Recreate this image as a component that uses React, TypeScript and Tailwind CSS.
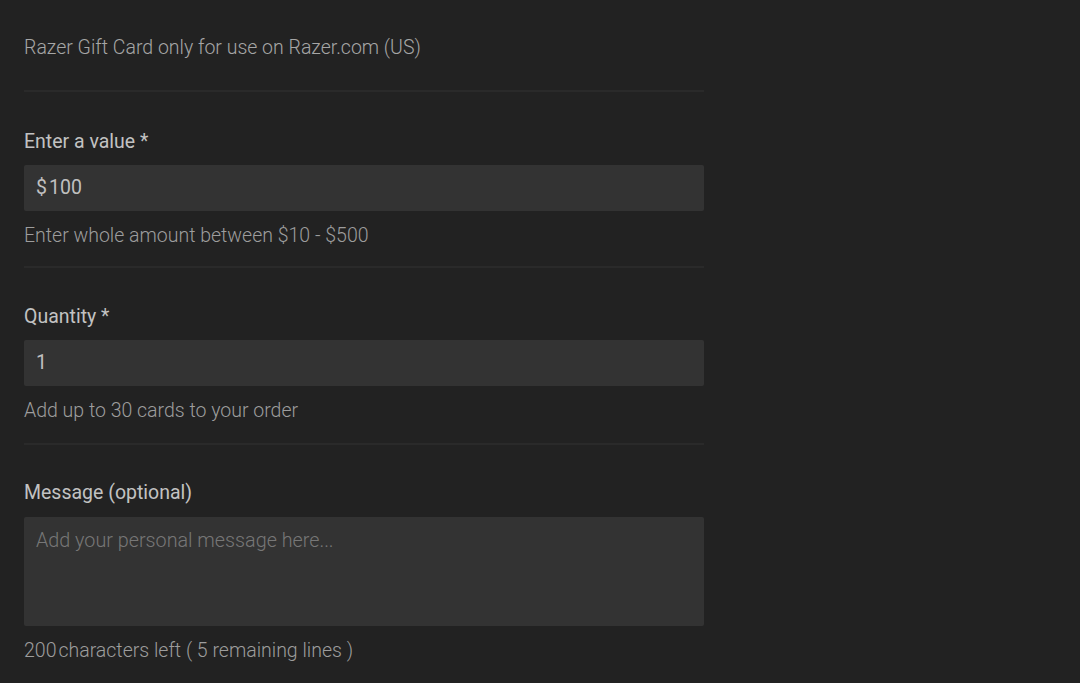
import React from "react";

function Divider() {
  return <div className="h-[2px] bg-[#2a2a2a]" />;
}

export default function App() {
  return (
    <div className="min-h-[683px] w-full bg-[#222222] font-['Roboto',sans-serif] font-light text-[19.5px] leading-[24px]">
      <div className="w-[680px] ml-6">
        <div className="pt-[36px] pb-[30px] text-[#a6a6a6]">
          Razer Gift Card only for use on Razer.com (US)
        </div>
        <Divider />
        <div className="pt-[38px] pb-[18px]">
          <div className="text-[#c2c2c2] font-normal">Enter a value *</div>
          <div className="mt-[11px] h-[46px] rounded-[2px] bg-[#333333] px-3 flex items-center text-[#c0c0c0] font-normal">
            $<span className="ml-[2px]">100</span>
          </div>
          <div className="mt-[13px] text-[#9d9d9d]">Enter whole amount between $10 - $500</div>
        </div>
        <Divider />
        <div className="pt-[37px] pb-[20px]">
          <div className="text-[#c2c2c2] font-normal">Quantity *</div>
          <div className="mt-[11px] h-[46px] rounded-[2px] bg-[#333333] px-3 flex items-center text-[#c0c0c0] font-normal">
            1
          </div>
          <div className="mt-[13px] text-[#9d9d9d]">Add up to 30 cards to your order</div>
        </div>
        <Divider />
        <div className="pt-[36px] pb-[20px]">
          <div className="text-[#c2c2c2] font-normal">Message (optional)</div>
          <textarea
            placeholder="Add your personal message here..."
            className="mt-[12px] block w-full h-[109px] resize-none rounded-[2px] bg-[#333333] px-3 pt-[12px] text-[#bdbdbd] placeholder:text-[#777777] outline-none font-['Roboto',sans-serif] font-light text-[19.75px] leading-[24px]"
          />
          <div className="mt-[13px] text-[#9d9d9d]">
            200<span className="ml-[2px]">characters left ( 5 remaining lines )</span>
          </div>
        </div>
        <Divider />
      </div>
    </div>
  );
}
